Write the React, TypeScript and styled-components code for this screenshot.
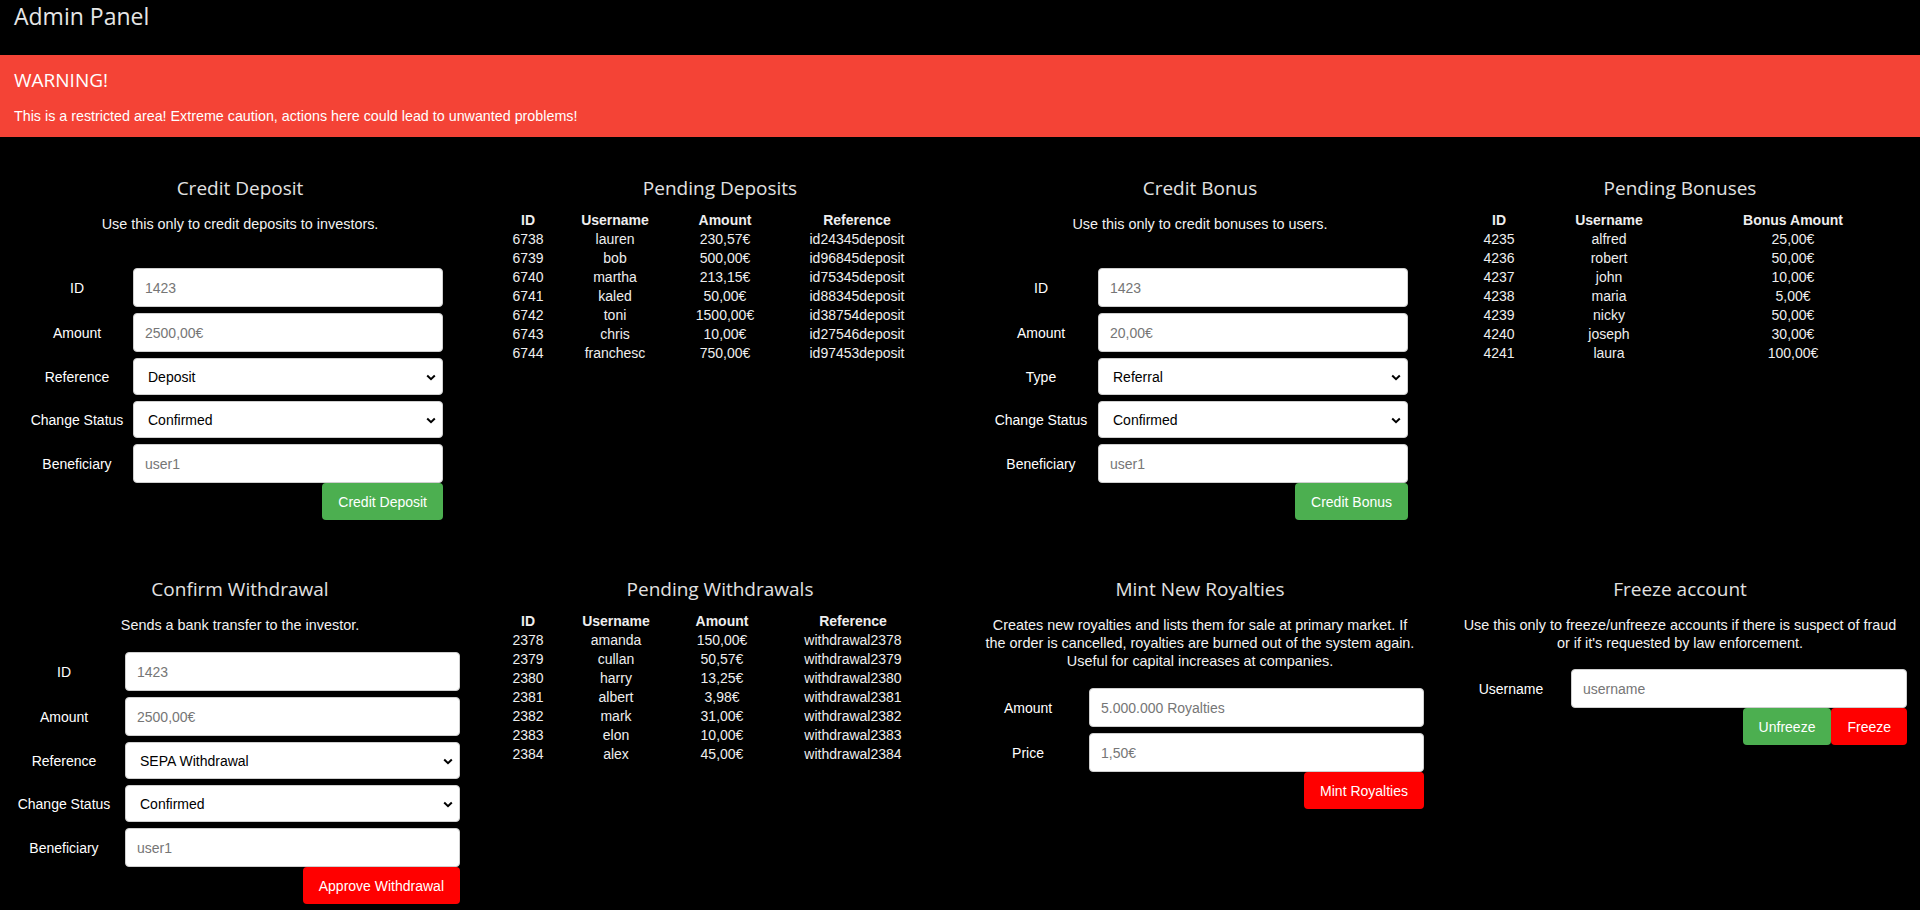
import React from "react";
import styled, { createGlobalStyle } from "styled-components";

const GlobalStyle = createGlobalStyle`
  *, *::before, *::after { box-sizing: border-box; }
  html, body { margin: 0; padding: 0; background: #000; }
  body {
    font-family: "Liberation Sans", Arial, sans-serif;
    font-size: 14px;
    color: #fff;
  }
`;

const Page = styled.div`
  background: #000;
  min-height: 910px;
`;

const Header = styled.header`
  height: 55px;
  padding: 0 14px;
`;

const AppTitle = styled.h1`
  margin: 0;
  font-family: "Open Sans", sans-serif;
  font-weight: 400;
  font-size: 23px;
  line-height: 32px;
  color: #e6e6e6;
`;

const Banner = styled.div`
  height: 82px;
  background: #f44336;
  color: #fff;
  padding: 12px 14px 0;
`;

const BannerTitle = styled.h3`
  margin: 0;
  font-family: "Open Sans", sans-serif;
  font-weight: 400;
  font-size: 19px;
  line-height: 26px;
`;

const BannerText = styled.p`
  margin: 14px 0 0;
  font-size: 14.3px;
  line-height: 18px;
`;

const Grid = styled.main`
  display: grid;
  grid-template-columns: repeat(4, 1fr);
  row-gap: 18px;
  align-items: start;
`;

const Section = styled.section`
  padding-top: 38px;
  text-align: center;
  min-width: 0;
`;

const SectionTitle = styled.h2`
  margin: 0;
  padding: 0 16px;
  font-family: "Open Sans", sans-serif;
  font-weight: 400;
  font-size: 19px;
  line-height: 26px;
  color: #e2e2e2;
`;

const Description = styled.p`
  margin: 14px 0 0;
  padding: 0 12px;
  font-size: 14.4px;
  line-height: 18px;
  color: #f2f2f2;
`;

const Form = styled.form<{ $pl: number; $pr: number; $mt: number }>`
  margin-top: ${(p) => p.$mt}px;
  padding: 0 ${(p) => p.$pr}px 0 ${(p) => p.$pl}px;
`;

const Fields = styled.div`
  display: flex;
  flex-direction: column;
  gap: 6px;
`;

const FieldRow = styled.div<{ $lw: number }>`
  display: grid;
  grid-template-columns: ${(p) => p.$lw}px 1fr;
  align-items: center;
`;

const Label = styled.label`
  display: flex;
  justify-content: center;
  white-space: nowrap;
  color: #fff;
`;

const TextInput = styled.input`
  width: 100%;
  height: 39px;
  border: 1px solid #cfcfcf;
  border-radius: 4px;
  padding: 0 11px;
  font-family: "Liberation Sans", Arial, sans-serif;
  font-size: 14px;
  color: #000;
  background: #fff;
  outline: none;
  &::placeholder { color: #767676; }
`;

const SelectWrap = styled.div`
  position: relative;
`;

const Select = styled.select`
  width: 100%;
  height: 37px;
  appearance: none;
  -webkit-appearance: none;
  border: 1px solid #cfcfcf;
  border-radius: 4px;
  padding: 0 30px 0 14px;
  font-family: "Liberation Sans", Arial, sans-serif;
  font-size: 14px;
  color: #000;
  background: #fff;
  outline: none;
`;

const Chevron = styled.svg`
  position: absolute;
  right: 7px;
  top: 50%;
  width: 10px;
  height: 7px;
  margin-top: -3px;
  pointer-events: none;
`;

const Actions = styled.div`
  display: flex;
  justify-content: flex-end;
`;

const ActionButton = styled.button<{ $variant: "green" | "red" }>`
  height: 37px;
  padding: 0 16px;
  border: none;
  border-radius: 4px;
  background: ${(p) => (p.$variant === "green" ? "#4caf50" : "#ff0000")};
  color: #fff;
  font-family: "Liberation Sans", Arial, sans-serif;
  font-size: 14px;
  cursor: pointer;
`;

const DataTable = styled.div<{ $cols: string; $pl: number }>`
  margin-top: 10px;
  padding-left: ${(p) => p.$pl}px;
  display: grid;
  grid-template-columns: ${(p) => p.$cols};
  color: #eeeeee;
`;

const HeadCell = styled.div`
  font-weight: 700;
  line-height: 19px;
  text-align: center;
  white-space: nowrap;
`;

const Cell = styled.div`
  line-height: 19px;
  text-align: center;
  white-space: nowrap;
`;

type Field =
  | { kind: "input"; label: string; placeholder: string }
  | { kind: "select"; label: string; value: string };

type FormSpec = {
  pl: number;
  pr: number;
  lw: number;
  mt: number;
  fields: Field[];
  buttons: { text: string; variant: "green" | "red" }[];
};

const ChevronIcon = () => (
  <Chevron viewBox="0 0 10 7">
    <path d="M1.2 1.5 L5 5.2 L8.8 1.5" fill="none" stroke="#000" strokeWidth="2" />
  </Chevron>
);

const AdminForm = ({ spec }: { spec: FormSpec }) => (
  <Form $pl={spec.pl} $pr={spec.pr} $mt={spec.mt} onSubmit={(e) => e.preventDefault()}>
    <Fields>
      {spec.fields.map((f) => (
        <FieldRow key={f.label} $lw={spec.lw}>
          <Label>{f.label}</Label>
          {f.kind === "input" ? (
            <TextInput placeholder={f.placeholder} />
          ) : (
            <SelectWrap>
              <Select defaultValue={f.value}>
                <option>{f.value}</option>
              </Select>
              <ChevronIcon />
            </SelectWrap>
          )}
        </FieldRow>
      ))}
    </Fields>
    <Actions>
      {spec.buttons.map((b) => (
        <ActionButton key={b.text} type="button" $variant={b.variant}>
          {b.text}
        </ActionButton>
      ))}
    </Actions>
  </Form>
);

const Table = ({
  cols,
  pl,
  head,
  rows,
}: {
  cols: string;
  pl: number;
  head: string[];
  rows: string[][];
}) => (
  <DataTable $cols={cols} $pl={pl}>
    {head.map((h) => (
      <HeadCell key={h}>{h}</HeadCell>
    ))}
    {rows.map((r) => r.map((c, i) => <Cell key={r[0] + "-" + i}>{c}</Cell>))}
  </DataTable>
);

const deposits = [
  ["6738", "lauren", "230,57€", "id24345deposit"],
  ["6739", "bob", "500,00€", "id96845deposit"],
  ["6740", "martha", "213,15€", "id75345deposit"],
  ["6741", "kaled", "50,00€", "id88345deposit"],
  ["6742", "toni", "1500,00€", "id38754deposit"],
  ["6743", "chris", "10,00€", "id27546deposit"],
  ["6744", "franchesc", "750,00€", "id97453deposit"],
];

const bonuses = [
  ["4235", "alfred", "25,00€"],
  ["4236", "robert", "50,00€"],
  ["4237", "john", "10,00€"],
  ["4238", "maria", "5,00€"],
  ["4239", "nicky", "50,00€"],
  ["4240", "joseph", "30,00€"],
  ["4241", "laura", "100,00€"],
];

const withdrawals = [
  ["2378", "amanda", "150,00€", "withdrawal2378"],
  ["2379", "cullan", "50,57€", "withdrawal2379"],
  ["2380", "harry", "13,25€", "withdrawal2380"],
  ["2381", "albert", "3,98€", "withdrawal2381"],
  ["2382", "mark", "31,00€", "withdrawal2382"],
  ["2383", "elon", "10,00€", "withdrawal2383"],
  ["2384", "alex", "45,00€", "withdrawal2384"],
];

const depositForm: FormSpec = {
  pl: 21,
  pr: 37,
  lw: 112,
  mt: 35,
  fields: [
    { kind: "input", label: "ID", placeholder: "1423" },
    { kind: "input", label: "Amount", placeholder: "2500,00€" },
    { kind: "select", label: "Reference", value: "Deposit" },
    { kind: "select", label: "Change Status", value: "Confirmed" },
    { kind: "input", label: "Beneficiary", placeholder: "user1" },
  ],
  buttons: [{ text: "Credit Deposit", variant: "green" }],
};

const bonusForm: FormSpec = {
  pl: 24,
  pr: 32,
  lw: 114,
  mt: 35,
  fields: [
    { kind: "input", label: "ID", placeholder: "1423" },
    { kind: "input", label: "Amount", placeholder: "20,00€" },
    { kind: "select", label: "Type", value: "Referral" },
    { kind: "select", label: "Change Status", value: "Confirmed" },
    { kind: "input", label: "Beneficiary", placeholder: "user1" },
  ],
  buttons: [{ text: "Credit Bonus", variant: "green" }],
};

const withdrawalForm: FormSpec = {
  pl: 3,
  pr: 20,
  lw: 122,
  mt: 18,
  fields: [
    { kind: "input", label: "ID", placeholder: "1423" },
    { kind: "input", label: "Amount", placeholder: "2500,00€" },
    { kind: "select", label: "Reference", value: "SEPA Withdrawal" },
    { kind: "select", label: "Change Status", value: "Confirmed" },
    { kind: "input", label: "Beneficiary", placeholder: "user1" },
  ],
  buttons: [{ text: "Approve Withdrawal", variant: "red" }],
};

const mintForm: FormSpec = {
  pl: 7,
  pr: 16,
  lw: 122,
  mt: 18,
  fields: [
    { kind: "input", label: "Amount", placeholder: "5.000.000 Royalties" },
    { kind: "input", label: "Price", placeholder: "1,50€" },
  ],
  buttons: [{ text: "Mint Royalties", variant: "red" }],
};

const freezeForm: FormSpec = {
  pl: 11,
  pr: 13,
  lw: 120,
  mt: 17,
  fields: [{ kind: "input", label: "Username", placeholder: "username" }],
  buttons: [
    { text: "Unfreeze", variant: "green" },
    { text: "Freeze", variant: "red" },
  ],
};

export default function App() {
  return (
    <Page>
      <GlobalStyle />
      <Header>
        <AppTitle>Admin Panel</AppTitle>
      </Header>
      <Banner>
        <BannerTitle>WARNING!</BannerTitle>
        <BannerText>
          This is a restricted area! Extreme caution, actions here could lead to unwanted problems!
        </BannerText>
      </Banner>
      <Grid>
        <Section>
          <SectionTitle>Credit Deposit</SectionTitle>
          <Description>Use this only to credit deposits to investors.</Description>
          <AdminForm spec={depositForm} />
        </Section>
        <Section>
          <SectionTitle>Pending Deposits</SectionTitle>
          <Table
            cols="80px 94px 126px 138px"
            pl={8}
            head={["ID", "Username", "Amount", "Reference"]}
            rows={deposits}
          />
        </Section>
        <Section>
          <SectionTitle>Credit Bonus</SectionTitle>
          <Description>Use this only to credit bonuses to users.</Description>
          <AdminForm spec={bonusForm} />
        </Section>
        <Section>
          <SectionTitle>Pending Bonuses</SectionTitle>
          <Table
            cols="90px 130px 238px"
            pl={14}
            head={["ID", "Username", "Bonus Amount"]}
            rows={bonuses}
          />
        </Section>
        <Section>
          <SectionTitle>Confirm Withdrawal</SectionTitle>
          <Description>Sends a bank transfer to the investor.</Description>
          <AdminForm spec={withdrawalForm} />
        </Section>
        <Section>
          <SectionTitle>Pending Withdrawals</SectionTitle>
          <Table
            cols="80px 96px 116px 146px"
            pl={8}
            head={["ID", "Username", "Amount", "Reference"]}
            rows={withdrawals}
          />
        </Section>
        <Section>
          <SectionTitle>Mint New Royalties</SectionTitle>
          <Description>
            Creates new royalties and lists them for sale at primary market. If
            <br />
            the order is cancelled, royalties are burned out of the system again.
            <br />
            Useful for capital increases at companies.
          </Description>
          <AdminForm spec={mintForm} />
        </Section>
        <Section>
          <SectionTitle>Freeze account</SectionTitle>
          <Description>
            Use this only to freeze/unfreeze accounts if there is suspect of fraud
            <br />
            or if it's requested by law enforcement.
          </Description>
          <AdminForm spec={freezeForm} />
        </Section>
      </Grid>
    </Page>
  );
}
